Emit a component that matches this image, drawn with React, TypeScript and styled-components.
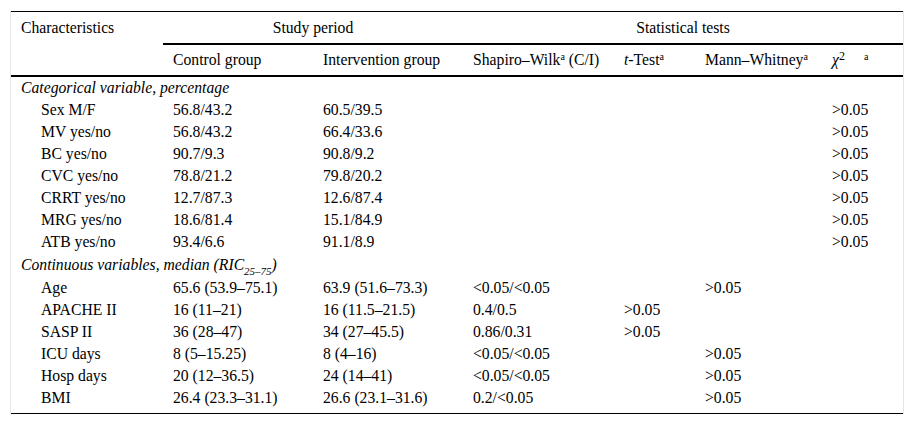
import React from "react";
import styled, { createGlobalStyle } from "styled-components";

const GlobalStyle = createGlobalStyle`
    body {
        margin: 0;
        background: #fff;
        font-family: "Liberation Serif", "Times New Roman", serif;
        color: #000;
    }
`;

type Fila = {
    nombre: string;
    control: string;
    intervencion: string;
    shapiro?: string;
    tTest?: string;
    mann?: string;
    chi?: string;
};

const categoricas: Fila[] = [
    { nombre: "Sex M/F", control: "56.8/43.2", intervencion: "60.5/39.5", chi: ">0.05" },
    { nombre: "MV yes/no", control: "56.8/43.2", intervencion: "66.4/33.6", chi: ">0.05" },
    { nombre: "BC yes/no", control: "90.7/9.3", intervencion: "90.8/9.2", chi: ">0.05" },
    { nombre: "CVC yes/no", control: "78.8/21.2", intervencion: "79.8/20.2", chi: ">0.05" },
    { nombre: "CRRT yes/no", control: "12.7/87.3", intervencion: "12.6/87.4", chi: ">0.05" },
    { nombre: "MRG yes/no", control: "18.6/81.4", intervencion: "15.1/84.9", chi: ">0.05" },
    { nombre: "ATB yes/no", control: "93.4/6.6", intervencion: "91.1/8.9", chi: ">0.05" },
];

const continuas: Fila[] = [
    { nombre: "Age", control: "65.6 (53.9–75.1)", intervencion: "63.9 (51.6–73.3)", shapiro: "<0.05/<0.05", mann: ">0.05" },
    { nombre: "APACHE II", control: "16 (11–21)", intervencion: "16 (11.5–21.5)", shapiro: "0.4/0.5", tTest: ">0.05" },
    { nombre: "SASP II", control: "36 (28–47)", intervencion: "34 (27–45.5)", shapiro: "0.86/0.31", tTest: ">0.05" },
    { nombre: "ICU days", control: "8 (5–15.25)", intervencion: "8 (4–16)", shapiro: "<0.05/<0.05", mann: ">0.05" },
    { nombre: "Hosp days", control: "20 (12–36.5)", intervencion: "24 (14–41)", shapiro: "<0.05/<0.05", mann: ">0.05" },
    { nombre: "BMI", control: "26.4 (23.3–31.1)", intervencion: "26.6 (23.1–31.6)", shapiro: "0.2/<0.05", mann: ">0.05" },
];

const anchos = [152, 150, 150, 151, 81, 127, 81];

const FilaDatos = ({ fila }: { fila: Fila }) => (
    <tr>
        <Celda $indent>{fila.nombre}</Celda>
        <Celda>{fila.control}</Celda>
        <Celda>{fila.intervencion}</Celda>
        <Celda>{fila.shapiro}</Celda>
        <Celda>{fila.tTest}</Celda>
        <Celda>{fila.mann}</Celda>
        <Celda>{fila.chi}</Celda>
    </tr>
);

const App = () => {
    return (
        <>
            <GlobalStyle />
            <Pagina>
                <Marco>
                    <Tabla>
                        <colgroup>
                            {anchos.map((w, i) => (
                                <col key={i} style={{ width: w }} />
                            ))}
                        </colgroup>
                        <thead>
                            <tr>
                                <Cabecera rowSpan={2}>Characteristics</Cabecera>
                                <Grupo colSpan={2}>Study period</Grupo>
                                <Grupo colSpan={4}>Statistical tests</Grupo>
                            </tr>
                            <tr>
                                <Subcabecera>Control group</Subcabecera>
                                <Subcabecera>Intervention group</Subcabecera>
                                <Subcabecera>Shapiro–Wilk<Sup>a</Sup> (C/I)</Subcabecera>
                                <Subcabecera><i>t</i>-Test<Sup>a</Sup></Subcabecera>
                                <Subcabecera>Mann–Whitney<Sup>a</Sup></Subcabecera>
                                <Subcabecera>
                                    <i>χ</i><Dos>2</Dos><Sup $separada>a</Sup>
                                </Subcabecera>
                            </tr>
                        </thead>
                        <tbody>
                            <tr>
                                <Seccion colSpan={7}>Categorical variable, percentage</Seccion>
                            </tr>
                            {categoricas.map((f) => (
                                <FilaDatos key={f.nombre} fila={f} />
                            ))}
                            <tr>
                                <Seccion colSpan={7} $alta>
                                    Continuous variables, median (RIC<Sub>25–75</Sub>)
                                </Seccion>
                            </tr>
                            {continuas.map((f) => (
                                <FilaDatos key={f.nombre} fila={f} />
                            ))}
                        </tbody>
                    </Tabla>
                </Marco>
            </Pagina>
        </>
    );
};

export default App;

const Pagina = styled.div`
    padding: 11px 10px 0 10px;
    box-sizing: border-box;
`;

const Marco = styled.div`
    border-left: 1px solid #e6e6e6;
    border-right: 1px solid #e6e6e6;
    width: 894px;
    box-sizing: border-box;
`;

const Tabla = styled.table`
    border-collapse: separate;
    border-spacing: 0;
    table-layout: fixed;
    width: 892px;
    border-top: 1px solid #000;
    border-bottom: 1px solid #000;
    padding-bottom: 4px;
    font-size: 15.7px;
    line-height: 18px;
`;

const Cabecera = styled.th`
    text-align: left;
    font-weight: normal;
    vertical-align: top;
    padding: 7px 0 0 10px;
    border-bottom: 2px solid #000;
    white-space: nowrap;
`;

const Grupo = styled.th`
    height: 31px;
    padding: 0;
    text-align: center;
    font-weight: normal;
    vertical-align: middle;
    border-bottom: 2px solid #000;
`;

const Subcabecera = styled.th`
    height: 30px;
    padding: 0 0 0 10px;
    text-align: left;
    font-weight: normal;
    vertical-align: middle;
    border-bottom: 2px solid #000;
    white-space: nowrap;
`;

const Seccion = styled.td<{ $alta?: boolean }>`
    height: ${(p) => (p.$alta ? "24px" : "22px")};
    padding: 0 0 0 10px;
    font-style: italic;
    vertical-align: middle;
    white-space: nowrap;
`;

const Celda = styled.td<{ $indent?: boolean }>`
    height: 22px;
    padding: 0 0 0 ${(p) => (p.$indent ? "30px" : "10px")};
    vertical-align: middle;
    white-space: nowrap;
`;

const Sup = styled.sup<{ $separada?: boolean }>`
    font-size: 10px;
    line-height: 0;
    vertical-align: 5px;
    margin-left: ${(p) => (p.$separada ? "19px" : "0")};
`;

const Dos = styled.sup`
    font-size: 12px;
    line-height: 0;
    vertical-align: 5px;
`;

const Sub = styled.sub`
    font-size: 11px;
    line-height: 0;
    vertical-align: -5px;
`;
